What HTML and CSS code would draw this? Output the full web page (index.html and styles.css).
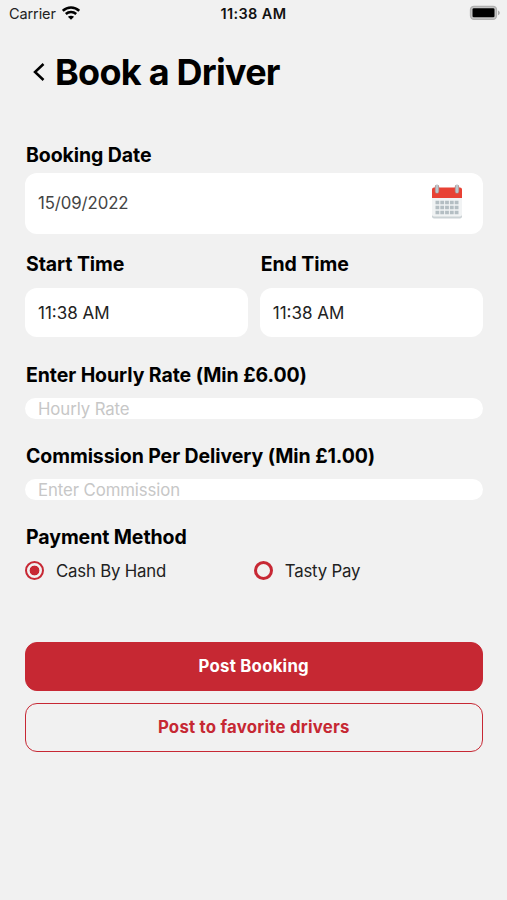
FILE: index.html
```html
<!DOCTYPE html>
<html lang="en">
<head>
    <meta charset="utf-8">
    <meta name="viewport" content="width=device-width, initial-scale=1.0">
    <title>Book a Driver</title>
    <link rel="stylesheet" href="styles.css">
</head>
<body>
    <!-- status bar -->
    <div class="status">
        <div class="carrier">
            <span>Carrier</span>
            <svg class="wifi" width="18" height="14" viewBox="0 0 18 14">
                <path d="M.8 4.800C5.500.400 12.500.400 17.200 4.800M3.800 8c3-2.700 7.400-2.700 10.400 0" fill="none" stroke="#000" stroke-width="2.500"/>
                <path d="M9 13.800L5.900 10.800c1.800-1.500 4.400-1.500 6.200 0z"/>
            </svg>
        </div>
        <span class="clock">11:38 AM</span>
        <svg class="battery" width="32" height="16" viewBox="0 0 32 16">
            <rect x="1.500" y="1.300" width="26" height="13" rx="3.500" fill="#c4c4c4" stroke="#b0b0b0" stroke-width="1.300"/>
            <rect x="3.500" y="3.300" width="22" height="9" rx="1.300"/>
            <path d="M29 5.400c2.400 1 2.400 3.800 0 4.800z" fill="#a8a8a8"/>
        </svg>
    </div>

    <div class="header">
        <svg class="back" width="12" height="20" viewBox="0 0 12 20">
            <path d="M10.500 2L2 10l8.500 8" fill="none" stroke="#000" stroke-width="2.500"/>
        </svg>
        <h1>Book a Driver</h1>
    </div>

    <div class="form">
        <h2>Booking Date</h2>
        <div class="field date">
            <span>15/09/2022</span>
            <svg width="32" height="37" viewBox="0 0 32 37">
                <path d="M1 12h30v20.500a2 2 0 0 1-2 2H3a2 2 0 0 1-2-2z" fill="#cbd2d5"/>
                <path d="M1 12h30v18.500a2 2 0 0 1-2 2H3a2 2 0 0 1-2-2z" fill="#f1f3f4"/>
                <path d="M3 3.500h26a2 2 0 0 1 2 2V14H1V5.500a2 2 0 0 1 2-2z" fill="#e84134"/>
                <path d="M4.500 18.500h23M4.500 23.500h23M4.500 28.500h23" stroke="#b4bec3" stroke-width="3.600" stroke-dasharray="3.800 1"/>
                <path d="M6 3v4.500M26 3v4.500" stroke="#b8756f" stroke-width="4.500" stroke-linecap="round"/>
                <path d="M6 2v5.500M26 2v5.500" stroke="#b9c8ce" stroke-width="3" stroke-linecap="round"/>
            </svg>
        </div>

        <div class="times">
            <div>
                <h2>Start Time</h2>
                <div class="field time">11:38 AM</div>
            </div>
            <div>
                <h2>End Time</h2>
                <div class="field time">11:38 AM</div>
            </div>
        </div>

        <h2>Enter Hourly Rate (Min £6.00)</h2>
        <div class="field input">Hourly Rate</div>

        <h2>Commission Per Delivery (Min £1.00)</h2>
        <div class="field input">Enter Commission</div>

        <h2>Payment Method</h2>
        <div class="payment">
            <div class="option"><i class="radio checked"></i><span>Cash By Hand</span></div>
            <div class="option"><i class="radio"></i><span>Tasty Pay</span></div>
        </div>

        <div class="btn primary">Post Booking</div>
        <div class="btn outline">Post to favorite drivers</div>
    </div>
</body>
</html>
```
FILE: styles.css
```css
* {
    box-sizing: border-box;
}
body {
    margin: 0;
    height: 900px;
    background-color: #f1f1f1;
    color: #000000;
    font-family: Inter, "Liberation Sans", sans-serif;
    font-size: 17px;
    overflow: hidden;
}
h1, h2 {
    margin: 0;
}
.status {
    display: grid;
    grid-template-columns: 1fr auto 1fr;
    align-items: center;
    height: 27px;
    padding: 0 6px 0 9px;
}
.carrier {
    display: flex;
    align-items: center;
    gap: 6px;
    color: #222222;
    font-size: 14.5px;
    letter-spacing: -0.1px;
}
.wifi {
    margin-top: -2px;
}
.clock {
    margin-left: -3px;
    font-size: 14.5px;
    font-weight: 600;
    letter-spacing: 0.35px;
    color: #111111;
}
.battery {
    justify-self: end;
    margin-top: -1px;
}
.header {
    display: flex;
    align-items: center;
    height: 44px;
    margin-top: 23px;
    padding-left: 33px;
}
.back {
    margin-right: 10px;
}
h1 {
    font-size: 36px;
    font-weight: 700;
    line-height: 44px;
    letter-spacing: -0.75px;
}
.form {
    padding: 48px 24.5px 0 25px;
}
h2 {
    padding: 2px 0 0 1px;
    font-size: 19.5px;
    font-weight: 700;
    line-height: 22px;
    letter-spacing: -0.08px;
    white-space: nowrap;
}
.field {
    display: flex;
    align-items: center;
    height: 49px;
    margin-top: 13px;
    padding: 0 13px;
    background-color: #ffffff;
    border-radius: 12px;
    font-size: 16.8px;
    letter-spacing: -0.1px;
    color: #222222;
}
.time {
    font-size: 17px;
    letter-spacing: 0;
}
.date {
    justify-content: space-between;
    height: 61px;
    margin-top: 7px;
    padding-right: 20px;
    padding-bottom: 2px;
    color: #444444;
}
.times {
    display: grid;
    grid-template-columns: 1fr 1fr;
    gap: 12px;
    margin: 17px 0 25px;
}
.input {
    height: 21px;
    margin: 12px 0 24px;
    border-radius: 10.5px;
    color: #c7c7c7;
}
.payment {
    display: grid;
    grid-template-columns: 1fr 1fr;
    height: 21px;
    margin: 12px 0 61px;
}
.option {
    display: flex;
    align-items: center;
    gap: 12px;
    font-size: 16.8px;
    letter-spacing: -0.2px;
    color: #222222;
}
.radio {
    width: 19px;
    height: 19px;
    border: 3px solid #c72834;
    border-radius: 50%;
}
.checked {
    border-width: 2.5px;
    background: radial-gradient(circle, #c72834 4.6px, transparent 5.2px);
}
.btn {
    display: flex;
    align-items: center;
    justify-content: center;
    height: 49px;
    margin-bottom: 12px;
    padding-bottom: 1px;
    border: 1px solid #c72834;
    border-radius: 12px;
    font-size: 16.8px;
    font-weight: 700;
    letter-spacing: 0.23px;
}
.primary {
    background-color: #c62833;
    color: #ffffff;
}
.outline {
    color: #c62833;
}
```
